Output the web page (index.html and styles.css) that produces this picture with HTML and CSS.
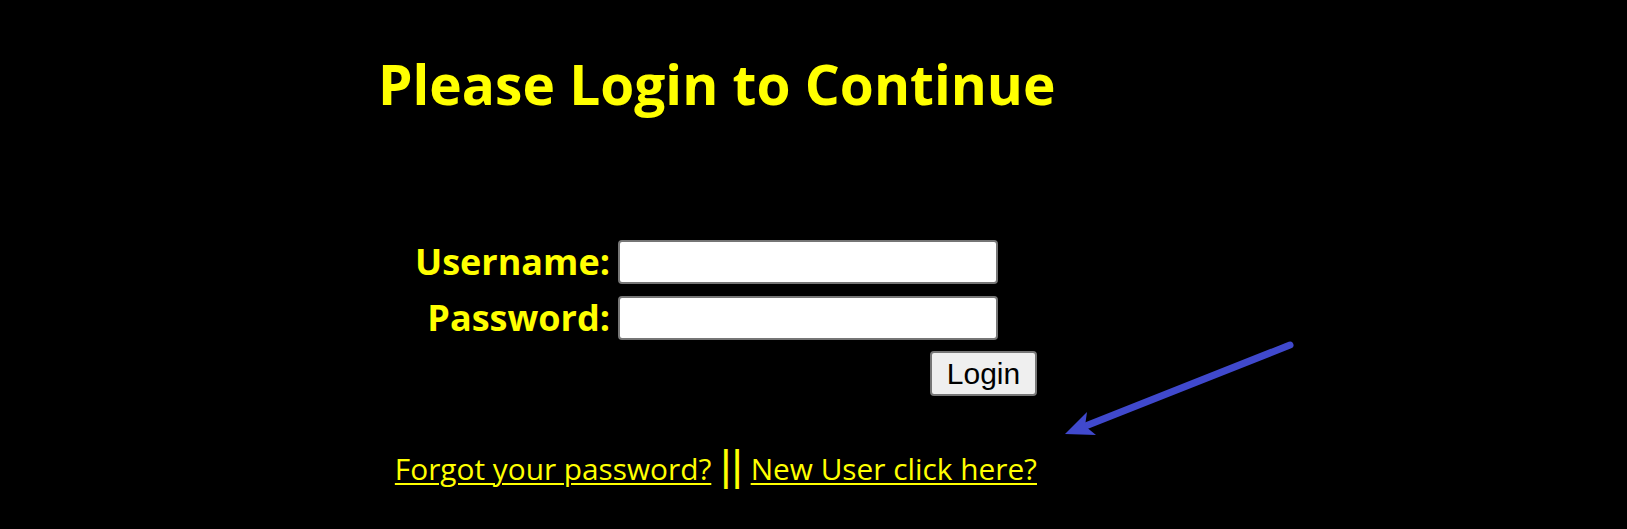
FILE: index.html
```html
<!DOCTYPE html>
<html lang="en">
<head>
<meta charset="utf-8">
<title>Login</title>
<link rel="stylesheet" href="styles.css">
</head>
<body>
<div class="wrap">
  <h1 class="title">Please Login to Continue</h1>
  <form class="panel">
    <div class="fields">
      <label class="label" for="user">Username:</label>
      <input class="field" id="user" type="text">
      <label class="label" for="pass">Password:</label>
      <input class="field" id="pass" type="password">
    </div>
    <div class="actions">
      <button class="btn" type="button">Login</button>
    </div>
    <div class="links">
      <a class="link" href="#">Forgot your password?</a>
      <span class="sep">||</span>
      <a class="link" href="#">New User click here?</a>
    </div>
  </form>
</div>
<svg class="arrow" width="1627" height="529" viewBox="0 0 1627 529" aria-hidden="true">
  <line x1="1290" y1="345" x2="1083" y2="427" stroke="#4049cd" stroke-width="7" stroke-linecap="round"/>
  <polygon points="1065,434 1087,412 1085,426 1096,435" fill="#4049cd"/>
</svg>
</body>
</html>
```
FILE: styles.css
```css
html, body {
  margin: 0;
  padding: 0;
  background: #000;
}
body {
  position: relative;
  width: 1627px;
  height: 529px;
  overflow: hidden;
  font-family: "Open Sans", "Noto Sans", sans-serif;
  color: #ffff00;
}
.wrap {
  padding-left: 378px;
  padding-top: 56px;
}
.title {
  margin: 0;
  font-size: 55px;
  line-height: 55px;
  font-weight: 700;
  color: #ffff00;
  white-space: nowrap;
}
.panel {
  margin: 129px 0 0 16px;
  width: 643px;
}
.fields {
  display: grid;
  grid-template-columns: 216px 380px;
  column-gap: 8px;
  row-gap: 12px;
}
.label {
  font-size: 36px;
  line-height: 44px;
  font-weight: 700;
  text-align: right;
  white-space: nowrap;
}
.field {
  box-sizing: border-box;
  width: 380px;
  height: 44px;
  margin: 0;
  padding: 2px 8px;
  border: 2px solid #767676;
  border-radius: 4px;
  background: #fff;
  font-size: 26px;
}
.actions {
  display: flex;
  justify-content: flex-end;
  margin-top: 11px;
}
.btn {
  box-sizing: border-box;
  width: 107px;
  height: 45px;
  margin: 0;
  padding: 0;
  border: 2px solid #767676;
  border-radius: 4px;
  background: #efefef;
  color: #000;
  font-family: "Liberation Sans", Arial, sans-serif;
  font-size: 30px;
  line-height: 1;
}
.links {
  display: flex;
  align-items: baseline;
  justify-content: flex-end;
  margin-top: 53px;
  font-size: 29.8px;
  line-height: 40px;
  white-space: nowrap;
}
.link {
  color: #ffff00;
  text-decoration: underline;
  text-decoration-thickness: 2px;
  text-underline-offset: 3px;
}
.sep {
  font-family: "Liberation Sans", Arial, sans-serif;
  font-size: 43px;
  line-height: 30px;
  margin: 0 8px 0 9px;
}
.arrow {
  position: absolute;
  left: 0;
  top: 0;
  pointer-events: none;
}
```
